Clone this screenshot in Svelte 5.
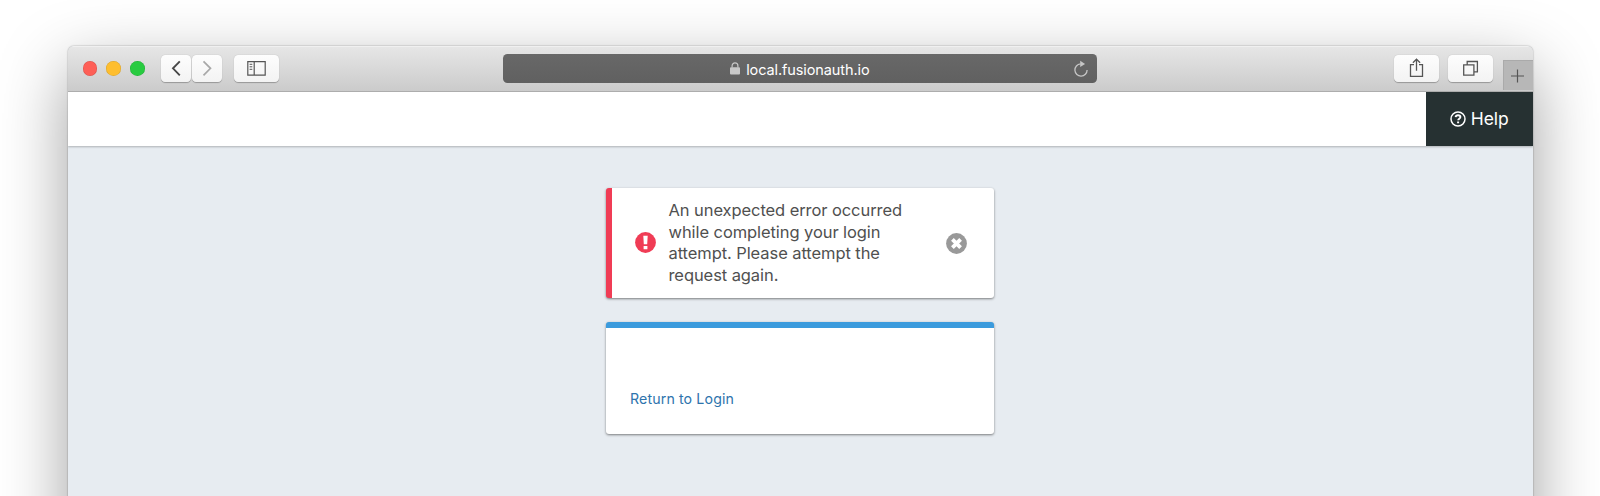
<script>
  const lights = ['#fe5f57', '#febe2f', '#28cb40'];
</script>

<main class="stage">
  <section class="window">
    <div class="toolbar">
      <div class="lights">
        {#each lights as color}
          <span class="light" style="background:{color}"></span>
        {/each}
      </div>
      <div class="nav">
        <button class="btn small" aria-label="Back">
          <svg width="30" height="27" viewBox="0 0 30 27"><path d="M18.8 6.3 12 13.3l6.8 7" fill="none" stroke="#484848" stroke-width="1.9" /></svg>
        </button>
        <button class="btn small" aria-label="Forward">
          <svg width="30" height="27" viewBox="0 0 30 27"><path d="M11.5 6.3l7 7-7 7" fill="none" stroke="#a8a8a8" stroke-width="1.7" /></svg>
        </button>
      </div>
      <button class="btn sidebar" aria-label="Sidebar">
        <svg width="45" height="27" viewBox="0 0 45 27" fill="none" stroke="#555" stroke-width="1.2">
          <path d="M13.8 6.6h17.4v13.6H13.8zM20.2 6.6v13.6" />
          <path d="M15.6 9.3h2.7M15.6 11.8h2.7M15.6 14.3h2.7" stroke-width="1" />
        </svg>
      </button>
      <div class="address">
        <div class="host">
          <svg width="10" height="13" viewBox="0 0 10 13"><rect y="5.2" width="10" height="7.4" rx="1" fill="#c8c8c8" /><path d="M2.1 5.5V3.8a2.9 2.9 0 0 1 5.8 0v1.7" fill="none" stroke="#c8c8c8" stroke-width="1.2" /></svg>
          <span>local.fusionauth.io</span>
        </div>
        <svg class="reload" width="16" height="18" viewBox="0 0 16 18"><path d="M7.5 3.9A6.1 6.1 0 1 0 14.1 10" fill="none" stroke="#c6c6c6" stroke-width="1.3" /><path d="M7.2 .8v6.1l4.9-3z" fill="#c6c6c6" /></svg>
      </div>
      <div class="right">
        <button class="btn wide" aria-label="Share">
          <svg width="45" height="27" viewBox="0 0 45 27" fill="none" stroke="#555" stroke-width="1.3"><path d="M20 9.6h-3.5v11.8h12V9.6H25M22.5 15.8V4.3M18.9 7.8l3.6-3.6 3.6 3.6" /></svg>
        </button>
        <button class="btn wide" aria-label="Tabs">
          <svg width="45" height="27" viewBox="0 0 45 27" fill="none" stroke="#555" stroke-width="1.3"><path d="M15.7 9.9h10.2v10.2H15.7zM19.2 9.5V6.5h10.2v10.3h-3.2" /></svg>
        </button>
      </div>
      <div class="plus">
        <svg width="29" height="30" viewBox="0 0 29 30"><path d="M8 16h13M14.5 9.5v13" stroke="#555" stroke-width="1.2" /></svg>
      </div>
    </div>
    <header>
      <a class="help" href="#help">
        <svg width="16" height="16" viewBox="0 0 16 16" fill="none" stroke="#fff"><circle cx="8" cy="8" r="7" stroke-width="1.5" /><path d="M5.6 6.2C5.8 4.9 6.7 4.2 8 4.2c1.4 0 2.4.8 2.4 1.9 0 1.7-2.2 1.6-2.2 3.2" stroke-width="1.9" /><path d="M7.1 11.4h2" stroke-width="1.9" /></svg>
        <span>Help</span>
      </a>
    </header>
    <div class="content">
      <div class="card alert">
        <svg width="21" height="21" viewBox="0 0 21 21"><circle cx="10.5" cy="10.5" r="10.4" fill="#f03c55" /><path d="M8.3 3.7h4.4l-.5 8.6H8.8zM8.6 13.9h3.8v3.3H8.6z" fill="#fff" /></svg>
        <p>An unexpected error occurred<br />while completing your login<br />attempt. Please attempt the<br />request again.</p>
        <svg class="close" width="21" height="21" viewBox="0 0 21 21"><circle cx="10.5" cy="10.5" r="10.4" fill="#999" /><path d="M6.4 6.4l8.2 8.2M14.6 6.4l-8.2 8.2" stroke="#fff" stroke-width="3.8" /></svg>
      </div>
      <div class="card panel">
        <a href="#login">Return to Login</a>
      </div>
    </div>
  </section>
</main>

<style>
  :global(body) { margin: 0; background: #fff; }
  .stage {
    box-sizing: border-box;
    width: 1600px;
    height: 496px;
    padding: 45.5px 67.5px 0;
    overflow: hidden;
    background: #fff;
    font-family: Inter, "Liberation Sans", sans-serif;
  }
  .window {
    width: 1465px;
    height: 800px;
    border-radius: 6px;
    background: #e7ecf1;
    box-shadow: 0 0 1.5px rgba(0, 0, 0, .5), 0 24px 68px rgba(0, 0, 0, .38);
    overflow: hidden;
  }
  .toolbar {
    box-sizing: border-box;
    display: flex;
    height: 46px;
    padding: 0 0 0 15px;
    align-items: flex-start;
    background: linear-gradient(#e6e6e6, #cbcbcb);
    border-top: 1px solid #f0f0f0;
    border-bottom: 1.5px solid #b0b0b0;
  }
  .lights { display: flex; gap: 9.4px; padding-top: 14.8px; width: 78px; }
  .light { width: 14.6px; height: 14.6px; border-radius: 50%; box-shadow: inset 0 0 0 .5px rgba(0, 0, 0, .14); }
  .nav { display: flex; gap: 1px; margin-right: 11.5px; }
  .btn {
    box-sizing: border-box;
    height: 26.5px;
    margin: 8.7px 0 0;
    padding: 0;
    border: 0;
    border-radius: 4.5px;
    background: linear-gradient(#fdfdfd, #f3f3f3);
    box-shadow: 0 .5px 1px rgba(0, 0, 0, .28);
    overflow: hidden;
  }
  .btn svg { display: block; }
  .small { width: 30.3px; }
  .sidebar { width: 45px; margin-right: 224px; }
  .address {
    display: flex;
    align-items: center;
    justify-content: center;
    box-sizing: border-box;
    width: 594.5px;
    height: 29px;
    margin-top: 7.5px;
    border-radius: 4.5px;
    background: linear-gradient(#686868, #606060);
    color: #fff;
    font-size: 14.5px;
    letter-spacing: -.1px;
    padding: 1px 8px 0 24px;
  }
  .host { display: flex; flex: 1; align-items: center; justify-content: center; gap: 6px; }
  .host svg { margin-top: -1px; }
  .right { display: flex; gap: 9px; margin-left: 297px; }
  .wide { width: 45px; }
  .plus { width: 30px; height: 30px; margin: 13.5px 0 0 auto; background: #b7b7b7; box-shadow: inset 1px 1px #aaa; }
  header { display: flex; justify-content: flex-end; height: 54px; background: #fff; box-shadow: 0 1px 2px rgba(0, 0, 0, .25); position: relative; }
  .help {
    display: flex;
    align-items: center;
    justify-content: center;
    gap: 5px;
    width: 106.5px;
    background: #263132;
    color: #fff;
    font-size: 17.5px;
    text-decoration: none;
  }
  .content { display: flex; flex-direction: column; align-items: center; gap: 24px; padding-top: 42px; }
  .card {
    box-sizing: border-box;
    width: 388px;
    border-radius: 3px;
    background: #fff;
    box-shadow: 0 1px 2.5px rgba(0, 0, 0, .48);
  }
  .alert { display: flex; align-items: center; height: 110.5px; padding: 0 27.5px 0 23px; border-left: 6px solid #f03c55; }
  p { margin: 1px 0 0 12.5px; color: #505050; font-size: 16.5px; letter-spacing: -.08px; line-height: 21.7px; }
  .close { margin-left: auto; position: relative; top: .5px; }
  .panel { height: 112px; padding: 61px 24px 0; border-top: 6px solid #3b9bdd; }
  .panel a { color: #2e74ad; font-size: 14.2px; letter-spacing: .12px; line-height: 20px; text-decoration: none; display: block; }
</style>
